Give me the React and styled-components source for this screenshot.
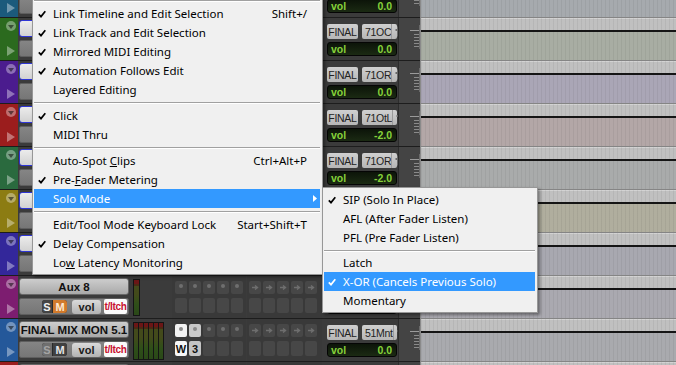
import React from "react";
import styled, { createGlobalStyle } from "styled-components";

const GlobalStyle = createGlobalStyle`
  html, body { margin: 0; padding: 0; }
  body {
    background: #3a3a3a;
    overflow: hidden;
    font-family: "Liberation Sans", Arial, sans-serif;
  }
`;

const Screen = styled.div`
  position: relative;
  width: 676px;
  height: 365px;
  overflow: hidden;
  background: #3a3a3a;
`;

const TrackList = styled.div`
  display: flex;
  flex-direction: column;
  margin-top: -25px;
`;

const TrackRow = styled.div`
  display: flex;
  height: 43px;
  flex-shrink: 0;
`;

const Controls = styled.div`
  display: flex;
  width: 420px;
  flex-shrink: 0;
  background: #3b3b3b;
  border-bottom: 1px solid #1d1d1d;
  box-sizing: border-box;
`;

const ColorStrip = styled.div`
  width: 18px;
  margin-right: 1px;
  background: ${(p) => p.$color};
  display: flex;
  flex-direction: column;
  justify-content: space-between;
  padding: 3px 0 4px 6px;
  box-sizing: border-box;
`;

const DropButton = styled.div`
  width: 10px;
  height: 10px;
  border-radius: 50%;
  background: rgba(255, 255, 255, 0.36);
  display: flex;
  align-items: center;
  justify-content: center;
  &::after {
    content: "";
    border-left: 3px solid transparent;
    border-right: 3px solid transparent;
    border-top: 4px solid rgba(0, 0, 0, 0.5);
    margin-top: 1px;
  }
`;

const PlayArrow = styled.div`
  width: 0;
  height: 0;
  margin-left: 1px;
  border-top: 5px solid transparent;
  border-bottom: 5px solid transparent;
  border-left: 8px solid rgba(255, 255, 255, 0.38);
`;

const NameColumn = styled.div`
  width: 110px;
  margin-right: 1px;
  display: flex;
  flex-direction: column;
  gap: 3px;
  padding-top: 2px;
`;

const NameButton = styled.div`
  height: 17px;
  box-sizing: border-box;
  border: 1px solid ${(p) => (p.$selected ? "#2f36d6" : "#676767")};
  border-radius: 3px;
  background: ${(p) =>
    p.$selected
      ? "linear-gradient(#ececec, #d2d2d2)"
      : "linear-gradient(#cdcdcd, #a9a9a9)"};
  color: #111;
  font: bold 11.5px "Liberation Sans", Arial, sans-serif;
  display: flex;
  align-items: center;
  justify-content: center;
  white-space: nowrap;
  overflow: hidden;
`;

const ControlStrip = styled.div`
  height: 17px;
  box-sizing: border-box;
  border-radius: 2px;
  background: linear-gradient(#858585, #767676);
  border: 1px solid #5e5e5e;
  display: flex;
  align-items: center;
  padding-left: 22px;
`;

const SoloMute = styled.div`
  display: flex;
  gap: 1px;
  border-radius: 3px;
  overflow: hidden;
  background: #2a2a2a;
  margin-right: 5px;
`;

const SMButton = styled.div`
  width: ${(p) => p.$w}px;
  height: 13px;
  background: ${(p) => p.$bg};
  color: ${(p) => p.$fg};
  font: bold 11px "Liberation Sans", Arial, sans-serif;
  display: flex;
  align-items: center;
  justify-content: center;
`;

const VolButton = styled.div`
  width: 29px;
  height: 14px;
  border-radius: 3px;
  background: linear-gradient(#dadada, #b2b2b2);
  color: #1a1a1a;
  font: bold 11px "Liberation Sans", Arial, sans-serif;
  display: flex;
  align-items: center;
  justify-content: center;
  margin-right: 3px;
`;

const AutoButton = styled.div`
  width: 23px;
  height: 15px;
  border-radius: 2px;
  background: #fafafa;
  color: #c8102e;
  font: bold 10px "Liberation Sans", Arial, sans-serif;
  letter-spacing: -0.3px;
  display: flex;
  align-items: center;
  justify-content: center;
`;

const MeterArea = styled.div`
  width: 42px;
  display: flex;
  padding: 3px 0 0 3px;
  box-sizing: border-box;
`;

const Meter = styled.div`
  width: ${(p) => p.$w}px;
  height: ${(p) => p.$h}px;
  box-sizing: border-box;
  border: 1px solid #151515;
  border-left-width: ${(p) => (p.$first ? 1 : 0)}px;
  background: linear-gradient(
    #6b1616 0 4px,
    #4b2a14 4px 6px,
    #434a1b 6px 40%,
    #2f4f19 70%,
    #2a4818
  );
`;

const SlotGroup = styled.div`
  width: ${(p) => p.$w}px;
  display: grid;
  grid-template-columns: repeat(5, 12px);
  grid-template-rows: 13px 15px;
  column-gap: 2px;
  row-gap: 4px;
  padding: 5px 0 0 ${(p) => p.$pad}px;
  box-sizing: border-box;
  background: #393939;
  margin-right: ${(p) => p.$gap || 0}px;
`;

const Slot = styled.div`
  border-radius: 2px;
  background: ${(p) => p.$bg || "#474747"};
  color: #111;
  font: bold 11px "Liberation Sans", Arial, sans-serif;
  display: flex;
  align-items: center;
  justify-content: center;
`;

const SlotDot = styled.div`
  width: 4px;
  height: 4px;
  border-radius: 50%;
  background: ${(p) => p.$c || "#6e6e6e"};
  margin-top: -3px;
`;

const IOColumn = styled.div`
  width: 76px;
  display: flex;
  flex-direction: column;
  gap: 3px;
  padding: 6px 0 0 5px;
  box-sizing: border-box;
`;

const IORow = styled.div`
  display: flex;
  gap: 4px;
`;

const IOButton = styled.div`
  width: ${(p) => p.$w}px;
  height: 15px;
  box-sizing: border-box;
  border-radius: 2px;
  background: linear-gradient(#d0d0d0, #b6b6b6);
  color: #222;
  font: 10.5px "Liberation Sans", Arial, sans-serif;
  letter-spacing: -0.3px;
  display: flex;
  align-items: center;
  justify-content: ${(p) => (p.$split ? "space-between" : "center")};
  padding: ${(p) => (p.$split ? "0 1px 0 3px" : "0")};
`;

const FaderTab = styled.div`
  display: flex;
  align-items: center;
  height: 100%;
  padding-left: 2px;
  border-left: 1px solid #9a9a9a;
`;

const VolDisplay = styled.div`
  width: 70px;
  height: 14px;
  box-sizing: border-box;
  border: 1px solid #050505;
  border-radius: 3px;
  background: linear-gradient(#0c1409, #1b2a13);
  color: #86d23a;
  font: bold 10.5px "Liberation Sans", Arial, sans-serif;
  display: flex;
  align-items: center;
  justify-content: space-between;
  padding: 0 4px 0 3px;
`;

const RulerColumn = styled.div`
  width: 22px;
  background: #444;
  border-left: 1px solid #2c2c2c;
  box-sizing: border-box;
`;

const Timeline = styled.div`
  flex: 1;
  box-sizing: border-box;
  border-bottom: 1px solid #858585;
  border-left: 1px solid #8a8a8a;
  background: repeating-linear-gradient(
      90deg,
      rgba(0, 0, 0, 0.055) 0 1px,
      transparent 1px 4px
    ),
    linear-gradient(
      #d3d3d3 0 1px,
      #c0c0c0 1px 12px,
      #151515 12px 14px,
      ${(p) => p.$tint} 14px
    );
`;

const Menu = styled.div`
  position: absolute;
  left: ${(p) => p.$left}px;
  top: ${(p) => p.$top}px;
  width: ${(p) => p.$width}px;
  box-sizing: border-box;
  background: #f0f0f0;
  border: 1px solid #979797;
  padding: 2px 2px 2px 1px;
  box-shadow: 2px 2px 3px rgba(0, 0, 0, 0.4);
  font-family: "Noto Sans", "Open Sans", sans-serif;
  font-size: 11.5px;
  color: #000;
`;

const MenuItem = styled.div`
  position: relative;
  height: 19px;
  display: flex;
  align-items: center;
  padding: 0 13px 0 4px;
  background: ${(p) => (p.$active ? "#3399ff" : "transparent")};
  color: ${(p) => (p.$active ? "#fff" : "#000")};
  white-space: nowrap;
`;

const CheckSlot = styled.span`
  width: 15px;
  flex-shrink: 0;
  display: flex;
  align-items: center;
`;

const Label = styled.span`
  flex: 1;
  u {
    text-decoration: underline;
    text-underline-offset: 1px;
  }
`;

const Shortcut = styled.span`
  margin-left: 20px;
`;

const SubArrow = styled.svg`
  position: absolute;
  right: 3px;
  top: 6px;
`;

const Separator = styled.div`
  height: ${(p) => p.$h || 7}px;
  display: flex;
  align-items: center;
  &::before {
    content: "";
    flex: 1;
    height: 1px;
    background: #a0a0a0;
    box-shadow: 0 1px 0 #ffffff;
  }
`;

const Check = () => (
  <svg width="8" height="8" viewBox="0 0 8 8">
    <path
      d="M0.8 4.3 L3 6.6 L7.3 1.2"
      fill="none"
      stroke="currentColor"
      strokeWidth="1.7"
    />
  </svg>
);

const Arrow = () => (
  <svg width="7" height="5" viewBox="0 0 7 5">
    <path d="M0 2.5 H4.5 M3 0.5 L5.5 2.5 L3 4.5" stroke="#6e6e6e" strokeWidth="1.4" fill="none" />
  </svg>
);

const FaderIcon = () => (
  <svg width="7" height="11" viewBox="0 0 7 11">
    <path d="M3.5 0.5 V10.5" stroke="#6a6a6a" strokeWidth="1" />
    <rect x="1.5" y="3" width="4" height="2" fill="#6a6a6a" />
  </svg>
);

const RulerTicks = () => (
  <svg width="21" height="42" viewBox="0 0 21 42">
    <path d="M20.5 7 V31" stroke="#6a6a6a" strokeWidth="1" />
    <path d="M11 12.5 H20" stroke="#9a9a9a" strokeWidth="1" />
    {[16, 19, 22, 25, 28].map((y) => (
      <path key={y} d={`M15 ${y + 0.5} H20`} stroke="#8a8a8a" strokeWidth="1" />
    ))}
  </svg>
);

const tracks = [
  { color: "#1b5a7c", tint: "#a6aaae", out: "71OL", vol: "0.0", selected: true },
  { color: "#2b6a1e", tint: "#a8ada3", out: "71OC", vol: "0.0", selected: true },
  { color: "#4b1c8e", tint: "#aaa6b6", out: "71OR", vol: "0.0", selected: true },
  { color: "#9b1d1d", tint: "#b3a7a7", out: "71OtL", vol: "-2.0", selected: true },
  { color: "#2a6a3e", tint: "#a9abab", out: "71OR", vol: "-2.0", selected: true },
  { color: "#8c7c12", tint: "#b0ae9e", out: "71Ls", vol: "0.0", selected: true },
  { color: "#33279a", tint: "#a8a8b0", out: "71Rs", vol: "0.0", selected: true },
  { name: "Aux 8", color: "#7d1d70", tint: "#aaa9b0", out: "Bus", vol: "0.0", muted: true, meters: 1 },
  { name: "FINAL MIX MON 5.1", color: "#24589a", tint: "#a9aaae", out: "51Mnt", vol: "0.0", meters: 6, active: true },
  { color: "#9b1d1d", tint: "#a9aaae", out: "51", vol: "0.0" },
];

const InsertSlots = ({ active }) => {
  const top = [0, 1, 2, 3, 4].map((i) => {
    if (active && i === 0) return <Slot key={i} $bg="#f2f2f2"><SlotDot $c="#8a8a8a" /></Slot>;
    if (active && i === 1) return <Slot key={i} $bg="#c9c9c9"><SlotDot $c="#8a8a8a" /></Slot>;
    return <Slot key={i}><SlotDot /></Slot>;
  });
  const bottom = [0, 1, 2, 3, 4].map((i) => {
    if (active && i === 0) return <Slot key={i} $bg="#f7f7f7">W</Slot>;
    if (active && i === 1) return <Slot key={i} $bg="#c4c4c4">3</Slot>;
    return <Slot key={i} />;
  });
  return (
    <SlotGroup $w={74} $pad={3} $gap={1}>
      {top}
      {bottom}
    </SlotGroup>
  );
};

const SendSlots = () => (
  <SlotGroup $w={75} $pad={2}>
    {[0, 1, 2, 3, 4].map((i) => (
      <Slot key={i}><Arrow /></Slot>
    ))}
    {[0, 1, 2, 3, 4].map((i) => (
      <Slot key={"b" + i} />
    ))}
  </SlotGroup>
);

const Track = ({ t }) => (
  <TrackRow>
    <Controls>
      <ColorStrip $color={t.color}>
        <DropButton />
        <PlayArrow />
      </ColorStrip>
      <NameColumn>
        <NameButton $selected={t.selected}>{t.name}</NameButton>
        <ControlStrip>
          <SoloMute>
            <SMButton $w={10} $bg={t.muted ? "#454545" : "#6f6f6f"} $fg={t.muted ? "#f2f2f2" : "#a4a4a4"}>
              S
            </SMButton>
            <SMButton $w={14} $bg={t.muted ? "#d17a2c" : "#404040"} $fg={t.muted ? "#fde9d2" : "#e6e6e6"}>
              M
            </SMButton>
          </SoloMute>
          <VolButton>vol</VolButton>
          <AutoButton>t/ltch</AutoButton>
        </ControlStrip>
      </NameColumn>
      <MeterArea>
        {Array.from({ length: t.meters || 0 }).map((_, i) => (
          <Meter
            key={i}
            $first={i === 0}
            $w={t.meters > 1 ? (i === 0 ? 6 : 5) : 7}
            $h={t.meters > 1 ? 38 : 37}
          />
        ))}
      </MeterArea>
      <InsertSlots active={t.active} />
      <SendSlots />
      <IOColumn>
        <IORow>
          <IOButton $w={31}>FINAL</IOButton>
          <IOButton $w={35} $split>
            <span>{t.out}</span>
            <FaderTab>
              <FaderIcon />
            </FaderTab>
          </IOButton>
        </IORow>
        <VolDisplay>
          <span>vol</span>
          <span>{t.vol}</span>
        </VolDisplay>
      </IOColumn>
      <RulerColumn>
        <RulerTicks />
      </RulerColumn>
    </Controls>
    <Timeline $tint={t.tint} />
  </TrackRow>
);

const MainMenu = () => (
  <Menu $left={32} $top={-6} $width={291}>
    <Separator />
    <MenuItem>
      <CheckSlot><Check /></CheckSlot>
      <Label>Link Timeline and Edit Selection</Label>
      <Shortcut>Shift+/</Shortcut>
    </MenuItem>
    <MenuItem>
      <CheckSlot><Check /></CheckSlot>
      <Label>Link Track and Edit Selection</Label>
    </MenuItem>
    <MenuItem>
      <CheckSlot><Check /></CheckSlot>
      <Label>Mirrored MIDI Editing</Label>
    </MenuItem>
    <MenuItem>
      <CheckSlot><Check /></CheckSlot>
      <Label>Automation Follows Edit</Label>
    </MenuItem>
    <MenuItem>
      <CheckSlot />
      <Label>Layered Editing</Label>
    </MenuItem>
    <Separator />
    <MenuItem>
      <CheckSlot><Check /></CheckSlot>
      <Label>Click</Label>
    </MenuItem>
    <MenuItem>
      <CheckSlot />
      <Label>MIDI Thru</Label>
    </MenuItem>
    <Separator />
    <MenuItem>
      <CheckSlot />
      <Label>Auto-Spot <u>C</u>lips</Label>
      <Shortcut>Ctrl+Alt+P</Shortcut>
    </MenuItem>
    <MenuItem>
      <CheckSlot><Check /></CheckSlot>
      <Label>Pre-<u>F</u>ader Metering</Label>
    </MenuItem>
    <MenuItem $active>
      <CheckSlot />
      <Label>Solo Mode</Label>
      <SubArrow width="4" height="7" viewBox="0 0 4 7">
        <path d="M0 0 L4 3.5 L0 7 Z" fill="currentColor" />
      </SubArrow>
    </MenuItem>
    <Separator />
    <MenuItem>
      <CheckSlot />
      <Label>Edit/Tool Mode Keyboard Lock</Label>
      <Shortcut>Start+Shift+T</Shortcut>
    </MenuItem>
    <MenuItem>
      <CheckSlot><Check /></CheckSlot>
      <Label>Delay Compensation</Label>
    </MenuItem>
    <MenuItem>
      <CheckSlot />
      <Label>Lo<u>w</u> Latency Monitoring</Label>
    </MenuItem>
  </Menu>
);

const SoloMenu = () => (
  <Menu $left={322} $top={187} $width={216}>
    <MenuItem>
      <CheckSlot><Check /></CheckSlot>
      <Label>SIP (Solo In Place)</Label>
    </MenuItem>
    <MenuItem>
      <CheckSlot />
      <Label>AFL (After Fader Listen)</Label>
    </MenuItem>
    <MenuItem>
      <CheckSlot />
      <Label>PFL (Pre Fader Listen)</Label>
    </MenuItem>
    <Separator $h={6} />
    <MenuItem>
      <CheckSlot />
      <Label>Latch</Label>
    </MenuItem>
    <MenuItem $active>
      <CheckSlot><Check /></CheckSlot>
      <Label>X-OR (Cancels Previous Solo)</Label>
    </MenuItem>
    <MenuItem>
      <CheckSlot />
      <Label>Momentary</Label>
    </MenuItem>
  </Menu>
);

export default function App() {
  return (
    <>
      <GlobalStyle />
      <Screen>
        <TrackList>
          {tracks.map((t, i) => (
            <Track key={i} t={t} />
          ))}
        </TrackList>
        <MainMenu />
        <SoloMenu />
      </Screen>
    </>
  );
}
